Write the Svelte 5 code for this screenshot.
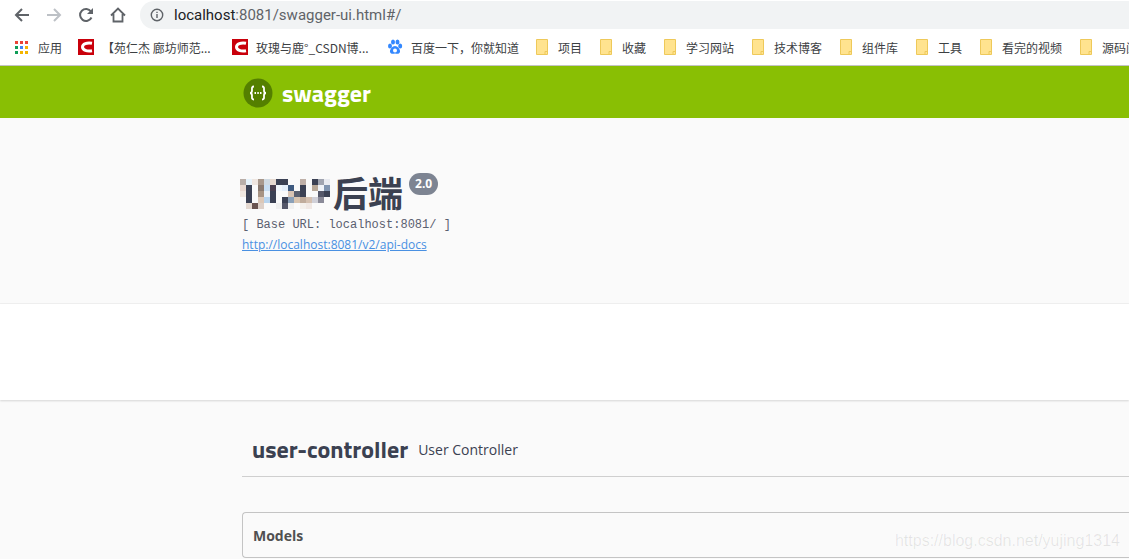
<script lang="ts">
const bookmarks = [
  { label: '【苑仁杰 廊坊师范...', icon: 'csdn', width: 154 },
  { label: '玫瑰与鹿°_CSDN博...', icon: 'csdn', width: 155 },
  { label: '百度一下，你就知道', icon: 'baidu', width: 149 },
  { label: '项目', icon: 'folder', width: 64 },
  { label: '收藏', icon: 'folder', width: 64 },
  { label: '学习网站', icon: 'folder', width: 88 },
  { label: '技术博客', icon: 'folder', width: 88 },
  { label: '组件库', icon: 'folder', width: 76 },
  { label: '工具', icon: 'folder', width: 64 },
  { label: '看完的视频', icon: 'folder', width: 100 },
  { label: '源码阅读', icon: 'folder', width: 88 },
]

const gridColors = ['#ea4335', '#ea4335', '#ea4335', '#0f9d58', '#4285f4', '#f4b400', '#0f9d58', '#f4b400', '#f4b400']

// pixelated part of the title
const d = '#3b4154'
const w = '#fafafa'
const mosaic = [
  ['#b9aea8', '#e6f2fa', '#efe6e0', '#a8988c', '#d0dae2', '#e5d9d0', d, d, w, w, '#bfb0a8', w, d, '#a0a4b0', '#e8eaf0'],
  ['#e8d8d0', d, w, '#8a7a70', '#c8def2', '#4a4050', '#f0f6fc', '#e4eefa', '#3e5a80', w, d, w, '#b8a898', '#eef2f8', '#8094b0'],
  ['#f0e8e0', d, w, '#a89484', '#eaf2fa', d, w, w, '#d8c4b4', '#5a6070', d, w, w, '#55586a', d],
  [w, d, w, '#dcc8b8', '#b8d4ee', d, w, d, '#8aa0b8', '#d8c4b0', '#c0ac9c', '#d4c0b0', '#d0d0d8', '#8a8a98', w],
  [w, '#e4d8d0', '#6a5450', '#ddd0c8', w, w, '#f0f0f0', '#55586a', '#f0f0f0', w, '#f4f0ec', '#f0e8e4', w, w, w],
]
</script>

<div class="browser-top">
  <div class="toolbar">
    <svg class="nav" viewBox="0 0 16 16" aria-hidden="true"><path d="M15 8H2.500M8 2 2 8l6 6" fill="none" stroke="#5f6368" stroke-width="2"/></svg>
    <svg class="nav" viewBox="0 0 16 16" aria-hidden="true"><path d="M1 8h12.500M8 2l6 6-6 6" fill="none" stroke="#bdc1c6" stroke-width="2"/></svg>
    <svg class="nav" viewBox="0 0 16 16" aria-hidden="true"><path d="M13.500 10.500A6 6 0 1 1 13 4.500" fill="none" stroke="#5f6368" stroke-width="2"/><path d="M15 1v6H9z" fill="#5f6368"/></svg>
    <svg class="nav" viewBox="0 0 16 16" aria-hidden="true"><path d="M1 8.500 8 1.500l7 7M3.500 7v7.500h9V7" fill="none" stroke="#5f6368" stroke-width="1.800"/></svg>
    <div class="omnibox">
      <svg class="info" viewBox="0 0 14 14" aria-hidden="true"><circle cx="7" cy="7" r="5.700" fill="none" stroke="#5f6368" stroke-width="1.400"/><path d="M7 6v4M7 3.700v1.400" stroke="#5f6368" stroke-width="1.400"/></svg>
      <span class="host">localhost</span><span class="path">:8081/swagger-ui.html#/</span>
    </div>
  </div>

  <div class="bookmarks">
    <div class="bookmark apps">
      <span class="apps-grid">
        {#each gridColors as color}
          <i style:background={color}></i>
        {/each}
      </span>
      <span>应用</span>
    </div>
    {#each bookmarks as item}
      <div class="bookmark" class:folder-item={item.icon === 'folder'} style:width="{item.width}px">
        {#if item.icon === 'csdn'}
          <svg class="favicon" viewBox="0 0 16 16" aria-hidden="true"><rect width="16" height="16" fill="#c9000b"/><path d="M14 4.300C9 3.300 4.500 5 4.500 8s4.500 4.700 9.500 3.700" fill="none" stroke="#fff" stroke-width="3"/></svg>
        {:else if item.icon === 'baidu'}
          <svg class="favicon" viewBox="0 0 16 16" aria-hidden="true"><g fill="#3388ff"><ellipse cx="3" cy="7" rx="2" ry="2.500"/><ellipse cx="6" cy="3" rx="2" ry="2.500"/><ellipse cx="10.500" cy="3" rx="2" ry="2.500"/><ellipse cx="13.200" cy="7" rx="2" ry="2.500"/><path d="M8 7c-2.500 0-5.500 3.500-5 6 .5 2 3 2 5 1.500 2 .5 4.500.5 5-1.500.5-2.500-2.500-6-5-6z"/></g><circle cx="8" cy="11.500" r="2" fill="#fff"/></svg>
        {:else}
          <svg class="favicon folder" viewBox="0 0 12 16" aria-hidden="true"><path d="M.5.500h11v15H.5z" fill="#ffe38f" stroke="#eec95a"/><path d="M9 15.500V12.500h2.500" fill="none" stroke="#eec95a"/></svg>
        {/if}
        <span>{item.label}</span>
      </div>
    {/each}
  </div>
</div>

<header class="topbar">
  <div class="wrapper topbar-inner">
    <svg class="logo" viewBox="0 0 30 30" aria-hidden="true">
      <circle cx="15" cy="15" r="14.500" fill="#547f00"/>
      <path d="M11 8.500c-2.500 0-2 2-2 4 0 1.500-.5 2.500-2 2.500 1.500 0 2 1 2 2.500 0 2-.5 4 2 4M19 8.500c2.500 0 2 2 2 4 0 1.500.5 2.500 2 2.500-1.500 0-2 1-2 2.500 0 2 .5 4-2 4" fill="none" stroke="#fff" stroke-width="1.800"/>
      <path d="M11.500 15h1.500M14.300 15h1.500M17 15h1.500" stroke="#fff" stroke-width="1.800"/>
    </svg>
    <span class="brand">swagger</span>
  </div>
</header>

<section class="info-section">
  <div class="wrapper">
    <div class="title-row">
      <div class="mosaic">
        {#each mosaic as row}
          {#each row as cell}
            <i style:background={cell}></i>
          {/each}
        {/each}
      </div>
      <h2>后端</h2>
      <span class="version">2.0</span>
    </div>
    <p class="base-url">[ Base URL: localhost:8081/ ]</p>
    <a class="docs-link" href="#docs">http://localhost:8081/v2/api-docs</a>
  </div>
</section>

<section class="scheme-section"></section>

<section class="ops-section">
  <div class="wrapper">
    <div class="tag-row">
      <span class="tag-name">user-controller</span>
      <span class="tag-desc">User Controller</span>
    </div>
    <div class="models"><span>Models</span></div>
  </div>
  <span class="watermark">https://blog.csdn.net/yujing1314</span>
</section>

<style>
  :global(body) {
    margin: 0;
    background: #fff;
    overflow: hidden;
    font-family: "Open Sans", "Noto Sans CJK SC", sans-serif;
  }

  .browser-top {
    height: 66px;
    box-sizing: border-box;
    border-bottom: 1px solid #c4c4c4;
    background: #fff;
    overflow: hidden;
  }

  .toolbar {
    display: flex;
    align-items: center;
    height: 30px;
    padding-left: 14px;
  }

  .nav {
    width: 16px;
    height: 16px;
    margin-right: 16px;
    flex-shrink: 0;
  }

  .omnibox {
    display: flex;
    align-items: center;
    flex: 1;
    height: 28px;
    margin-left: -2px;
    padding-left: 10px;
    border-radius: 14px 0 0 14px;
    background: #f1f3f4;
    font-family: "Roboto", sans-serif;
    font-size: 15px;
    white-space: nowrap;
  }

  .info {
    width: 14px;
    height: 14px;
    margin-right: 10px;
  }

  .host { color: #202124; }
  .path { color: #5f6368; }

  .bookmarks {
    display: flex;
    align-items: center;
    height: 34px;
    padding-left: 15px;
    font-family: "Noto Sans CJK SC", sans-serif;
    font-size: 12px;
    color: #3c4043;
    white-space: nowrap;
  }

  .bookmark {
    display: flex;
    align-items: center;
    gap: 8px;
    flex-shrink: 0;
    overflow: hidden;
  }

  .folder-item {
    gap: 10px;
  }

  .apps {
    width: 63px;
    gap: 10px;
  }

  .apps-grid {
    display: grid;
    grid-template-columns: repeat(3, 3px);
    gap: 2px;
  }

  .apps-grid i {
    width: 3px;
    height: 3px;
  }

  .favicon {
    width: 16px;
    height: 16px;
    flex-shrink: 0;
  }

  .folder {
    width: 12px;
  }

  .topbar {
    height: 52px;
    background: #89bf04;
  }

  .wrapper {
    margin-left: 242px;
  }

  .topbar-inner {
    display: flex;
    align-items: center;
    height: 54px;
  }

  .logo {
    width: 30px;
    height: 30px;
    margin-left: 1px;
  }

  .brand {
    margin-left: 9px;
    font-family: "Titillium Web", "Open Sans", sans-serif;
    font-size: 24px;
    font-weight: 700;
    color: #fff;
  }

  .info-section {
    height: 186px;
    box-sizing: border-box;
    border-bottom: 1px solid #f0f0f0;
    background: #fafafa;
    padding-top: 51px;
  }

  .title-row {
    display: flex;
    align-items: flex-start;
    height: 46px;
  }

  .mosaic {
    display: grid;
    grid-template-columns: repeat(15, 6px);
    grid-auto-rows: 6px;
    margin: 10px 3px 0 -2px;
  }

  h2 {
    margin: -1px 0 0;
    font-family: "Noto Sans CJK SC", sans-serif;
    font-size: 35px;
    line-height: 48px;
    font-weight: 700;
    color: #3b4151;
    white-space: nowrap;
  }

  .version {
    margin: 4px 0 0 6px;
    padding: 0 6px;
    height: 22px;
    border-radius: 11px;
    background: #7d8492;
    font-family: "Open Sans", sans-serif;
    font-size: 12px;
    line-height: 22px;
    font-weight: 700;
    color: #fff;
  }

  .base-url {
    margin: 0;
    font-family: "Liberation Mono", monospace;
    font-size: 12px;
    line-height: 20px;
    color: #5a6070;
  }

  .docs-link {
    display: block;
    font-family: "Open Sans", sans-serif;
    font-size: 12px;
    line-height: 20px;
    color: #4990e2;
  }

  .scheme-section {
    position: relative;
    z-index: 1;
    height: 96px;
    background: #fff;
    box-shadow: 0 1px 2px rgba(0, 0, 0, 0.15);
  }

  .ops-section {
    position: relative;
    height: 159px;
    background: #fafafa;
    overflow: hidden;
  }

  .tag-row {
    display: flex;
    align-items: center;
    height: 77px;
    box-sizing: border-box;
    padding: 29px 0 7px 10px;
    border-bottom: 1px solid #cfcfcf;
    color: #3b4151;
  }

  .tag-name {
    font-family: "Titillium Web", "Open Sans", sans-serif;
    font-size: 24px;
    font-weight: 700;
    line-height: 40px;
  }

  .tag-desc {
    margin-left: 10px;
    font-size: 14px;
  }

  .models {
    display: flex;
    align-items: center;
    height: 46px;
    box-sizing: border-box;
    margin-top: 35px;
    padding-left: 10px;
    border: 1px solid #c4c4c4;
    border-right: none;
    border-radius: 4px 0 0 4px;
    font-size: 14px;
    font-weight: 700;
    color: #505050;
  }

  .watermark {
    position: absolute;
    right: 9px;
    bottom: 9px;
    font-family: "Liberation Sans", sans-serif;
    font-size: 16px;
    color: rgba(0, 0, 0, 0.09);
  }
</style>
